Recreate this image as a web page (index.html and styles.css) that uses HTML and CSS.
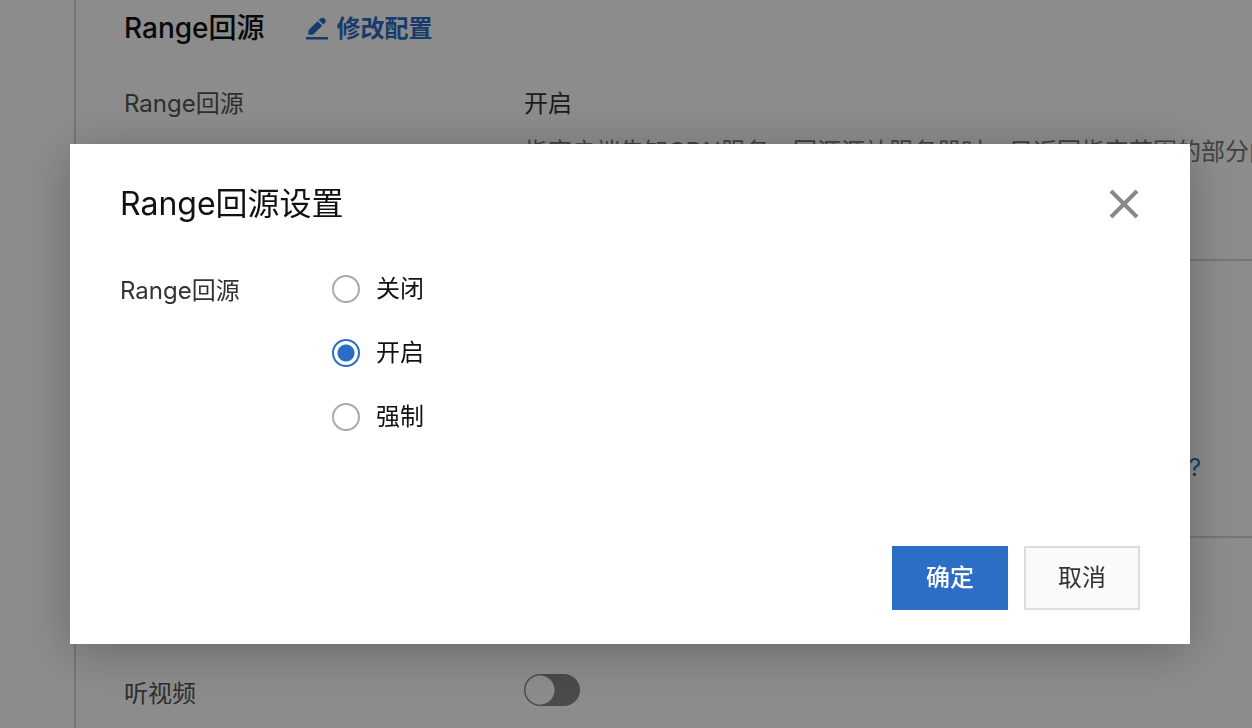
FILE: index.html
```html
<!DOCTYPE html>
<html lang="zh-CN">
<head>
<meta charset="utf-8">
<title>Range回源设置</title>
<link rel="stylesheet" href="styles.css">
</head>
<body>
<main class="page">
  <section class="section section-range">
    <header class="section-head">
      <h2 class="section-title">Range回源</h2>
      <a class="edit-link" href="#">
        <svg class="edit-icon" viewBox="0 0 24 24" aria-hidden="true">
          <path d="M1 20h22v2.6H1zM3.4 13.2 12.6 4.2l4.6 4.5-9.2 9H3.4zM13.8 3.1l1.6-1.6a3.2 3.2 0 0 1 4.5 4.5l-1.6 1.6z"/>
        </svg>
        <span>修改配置</span>
      </a>
    </header>
    <div class="row">
      <span class="label">Range回源</span>
      <div class="value">
        <p class="state">开启</p>
        <p class="hint">指客户端告知CDN服务，回源源站服务器时，只返回指定范围的部分内</p>
      </div>
    </div>
  </section>
  <section class="section section-help">
    <a class="help-link" href="#">?</a>
  </section>
  <section class="section section-video">
    <div class="row">
      <label class="label label-switch" for="listen">听视频</label>
      <input class="switch" type="checkbox" role="switch" id="listen">
    </div>
  </section>
</main>
<div class="overlay">
  <form class="dialog" role="dialog" aria-modal="true" aria-labelledby="dialog-title">
    <header class="dialog-head">
      <h1 class="dialog-title" id="dialog-title">Range回源设置</h1>
      <button class="close" type="button" aria-label="关闭">
        <svg class="close-icon" viewBox="0 0 32 32" aria-hidden="true"><path d="M3 3 29 29M29 3 3 29"/></svg>
      </button>
    </header>
    <div class="field" role="radiogroup" aria-labelledby="range-label">
      <span class="field-label" id="range-label">Range回源</span>
      <div class="options">
        <label class="option"><input class="radio" type="radio" name="range"><span>关闭</span></label>
        <label class="option"><input class="radio" type="radio" name="range" checked><span>开启</span></label>
        <label class="option"><input class="radio" type="radio" name="range"><span>强制</span></label>
      </div>
    </div>
    <footer class="actions">
      <button class="button button-primary" type="button">确定</button>
      <button class="button" type="button">取消</button>
    </footer>
  </form>
</div>
</body>
</html>
```
FILE: styles.css
```css
* { box-sizing: border-box; }

body {
  margin: 0;
  overflow: hidden;
  background: #fff;
  color: #333;
  font: 24px/32px Inter, "Noto Sans CJK SC", sans-serif;
}

h1, h2, p { margin: 0; }

button, input { font: inherit; margin: 0; }

.page {
  min-height: 100vh;
  margin-left: 74px;
  border-left: 2px solid #d6d6d6;
}

.section { padding-left: 48px; }
.section + .section { border-top: 2px solid #d6d6d6; }
.section-range { padding-top: 8px; padding-bottom: 91px; }

.section-head {
  display: flex;
  align-items: center;
  gap: 40px;
  height: 40px;
  margin-bottom: 40px;
}

.section-title {
  color: #111;
  font-size: 28px;
  font-weight: 500;
  line-height: 40px;
}

.edit-link {
  display: flex;
  align-items: center;
  gap: 8px;
  padding-top: 2px;
  color: #2a6dc5;
  font-weight: 600;
  text-decoration: none;
}

.edit-icon { width: 24px; height: 24px; fill: currentColor; }

.row {
  display: grid;
  grid-template-columns: 400px minmax(0, 1fr);
}

.label { color: #555; }
.label-switch { padding-top: 4px; }
.value { display: grid; grid-template-columns: minmax(0, 1fr); gap: 16px; }
.hint { overflow: hidden; color: #777; white-space: nowrap; }

.section-help {
  display: flex;
  justify-content: flex-end;
  padding: 191px 51px 52px 48px;
}

.help-link { color: #2a6dc5; text-decoration: none; }

.section-video { padding-top: 136px; }

.switch {
  appearance: none;
  width: 56px;
  height: 32px;
  border-radius: 16px;
  background: radial-gradient(circle at 16px 16px, #fff 14px, #888 15px);
}

.overlay {
  position: fixed;
  inset: 0;
  padding: 144px 62px 84px 70px;
  background: rgba(0, 0, 0, 0.45);
}

.dialog {
  padding: 36px 50px 34px;
  background: #fff;
  box-shadow: 0 8px 48px rgba(0, 0, 0, 0.26);
}

.dialog-head {
  display: flex;
  align-items: center;
  justify-content: space-between;
  margin-bottom: 45px;
}

.dialog-title {
  color: #111;
  font-size: 32px;
  font-weight: 400;
  line-height: 48px;
}

.close {
  padding: 0;
  border: 0;
  background: none;
  line-height: 0;
}

.close-icon {
  width: 32px;
  height: 32px;
  fill: none;
  stroke: #888;
  stroke-width: 4;
}

.field {
  display: grid;
  grid-template-columns: 212px minmax(0, 1fr);
  margin-bottom: 113px;
}

.field-label { padding-top: 2px; }

.options { display: grid; gap: 32px; color: #111; }

.option {
  display: flex;
  align-items: center;
  gap: 16px;
  justify-self: start;
}

.radio {
  appearance: none;
  width: 28px;
  height: 28px;
  border: 2px solid #aaa;
  border-radius: 50%;
  background: #fff;
}

.radio:checked {
  border-color: #2a6dc5;
  background: radial-gradient(circle, #2a6dc5 8px, #fff 9px);
}

.actions { display: flex; justify-content: flex-end; gap: 16px; }

.button {
  padding: 14px 32px;
  border: 2px solid #ddd;
  background: #fafafa;
  color: #333;
}

.button-primary {
  border-color: #2c6ec6;
  background: #2c6ec6;
  color: #fff;
  font-weight: 500;
}
```
